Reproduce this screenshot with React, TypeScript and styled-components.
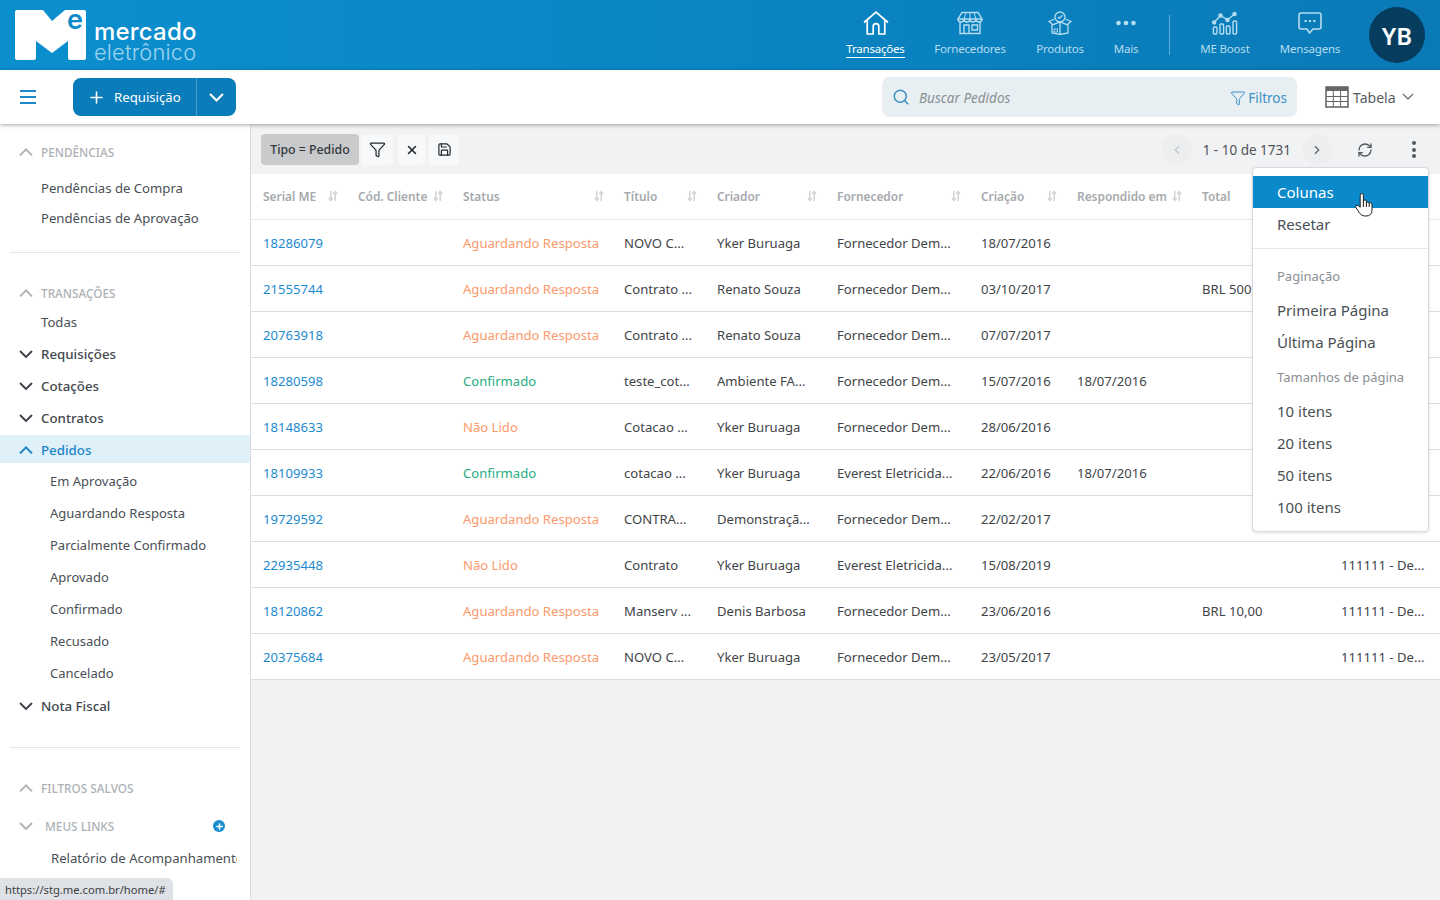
import React from 'react';
import styled, { createGlobalStyle } from 'styled-components';
import { ChevronLeft, ChevronRight, Filter, Plus, RefreshCw, Save, Search, X } from 'lucide-react';

const GlobalStyle = createGlobalStyle`
  html, body { margin: 0; padding: 0; height: 100%; overflow: hidden; }
  body { font-family: "Noto Sans", "Open Sans", sans-serif; color: #3a3f45; background: #fff; }
  * { box-sizing: border-box; }
`;

const Page = styled.div`
  position: relative;
  width: 1440px;
  height: 900px;
  display: flex;
  flex-direction: column;
  overflow: hidden;
`;

const Header = styled.header`
  height: 70px;
  flex: none;
  display: flex;
  align-items: center;
  padding: 0 15px;
  background: linear-gradient(90deg, #0b8fcf 0%, #0a7ab7 100%);
`;

const Logo = styled.div`
  display: flex;
  align-items: flex-end;
  gap: 8px;
  height: 50px;
`;

const LogoMark = styled.div`
  position: relative;
  width: 71px;
  height: 50px;
`;

const LogoE = styled.span`
  position: absolute;
  top: -7px;
  right: 3px;
  font: 600 27px "Inter", sans-serif;
  color: #0b8bca;
`;

const LogoWords = styled.div`
  display: flex;
  flex-direction: column;
  font-family: "Inter", sans-serif;
  line-height: 20px;
  height: 38px;
`;

const LogoTop = styled.span`
  font-size: 24px;
  font-weight: 500;
  color: #fff;
  letter-spacing: 0.2px;
`;

const LogoBottom = styled.span`
  font-size: 21.8px;
  font-weight: 300;
  color: #9fd3ec;
  letter-spacing: 0.2px;
`;

const TopNav = styled.nav`
  margin-left: auto;
  display: flex;
  align-items: center;
  height: 70px;
`;

const NavItem = styled.a<{ $active?: boolean; $w: number }>`
  width: ${(p) => p.$w}px;
  display: flex;
  flex-direction: column;
  align-items: center;
  padding-top: 9px;
  height: 70px;
  color: ${(p) => (p.$active ? '#fff' : '#b5dcef')};
  font-size: 11.5px;
  letter-spacing: -0.2px;
  white-space: nowrap;
`;

const NavIcon = styled.div`
  height: 28px;
  margin-bottom: 4px;
  display: flex;
  align-items: center;
  justify-content: center;
`;

const NavLabel = styled.span<{ $active?: boolean }>`
  line-height: 16px;
  padding-bottom: 0;
  border-bottom: 1px solid ${(p) => (p.$active ? '#fff' : 'transparent')};
`;

const NavDivider = styled.div`
  width: 1px;
  height: 40px;
  margin: 0 14px 0 17px;
  background: #62add3;
`;

const Avatar = styled.div`
  width: 56px;
  height: 56px;
  margin-left: 15px;
  border-radius: 50%;
  background: #063d5e;
  color: #fff;
  font-size: 24px;
  font-weight: 600;
  display: flex;
  align-items: center;
  justify-content: center;
`;

const Toolbar = styled.div`
  position: relative;
  z-index: 2;
  height: 54px;
  flex: none;
  display: flex;
  align-items: center;
  padding: 0 16px 0 20px;
  background: #fff;
  box-shadow: 0 1px 4px rgba(0, 0, 0, 0.35);
`;

const Burger = styled.div`
  width: 16px;
  height: 14px;
  display: flex;
  flex-direction: column;
  justify-content: space-between;
  span { height: 2px; background: #1e88cc; }
`;

const ActionButton = styled.div`
  margin-left: 37px;
  width: 163px;
  height: 38px;
  display: flex;
  border-radius: 8px;
  background: #0a7cb9;
  color: #fff;
  font-size: 13.2px;
`;

const ActionMain = styled.div`
  width: 124px;
  display: flex;
  align-items: center;
  gap: 8px;
  padding-left: 14px;
  border-right: 1px solid #4a9ecb;
`;

const ActionCaret = styled.div`
  flex: 1;
  display: flex;
  align-items: center;
  justify-content: center;
`;

const SearchBox = styled.div`
  margin-left: auto;
  width: 415px;
  height: 40px;
  display: flex;
  align-items: center;
  padding: 0 10px;
  border-radius: 8px;
  background: #e8eff3;
  color: #3c8fc4;
  font-size: 13.5px;
`;

const SearchText = styled.span`
  flex: 1;
  margin-left: 9px;
  padding-top: 1px;
  color: #8a8f94;
  font-style: italic;
  font-size: 13.5px;
`;

const FilterLink = styled.span`
  display: flex;
  align-items: center;
  gap: 2px;
  padding-top: 1px;
`;

const ViewSwitch = styled.div`
  width: 99px;
  margin-left: 28px;
  display: flex;
  align-items: center;
  gap: 4px;
  color: #555b60;
  font-size: 14px;
`;

const ViewCaret = styled.span`
  margin-left: 2px;
  display: flex;
`;

const Body = styled.div`
  flex: 1;
  display: flex;
  min-height: 0;
`;

const Sidebar = styled.aside`
  width: 251px;
  flex: none;
  padding-top: 12px;
  background: #fff;
  border-right: 1px solid #d9dbde;
  overflow: hidden;
`;

const SectionHead = styled.div<{ $indent?: number; $mt?: number }>`
  height: 32px;
  margin-top: ${(p) => p.$mt ?? 0}px;
  display: flex;
  align-items: center;
  padding-left: 19px;
  gap: ${(p) => p.$indent ?? 8}px;
  color: #adb1b5;
  font-size: 11.8px;
  font-weight: 500;
  svg { color: #b0b3b7; flex: none; }
`;

const PlusDot = styled.span`
  margin-left: 87px;
  width: 12px;
  height: 12px;
  border-radius: 50%;
  background: #1b8dd0;
  display: flex;
  align-items: center;
  justify-content: center;
  svg { color: #fff; }
`;

const SideLink = styled.div<{ $h?: number; $left?: number; $mt?: number; $mb?: number; $size?: number }>`
  height: ${(p) => p.$h ?? 30}px;
  margin: ${(p) => p.$mt ?? 0}px 13px ${(p) => p.$mb ?? 0}px 0;
  display: flex;
  align-items: center;
  padding-left: ${(p) => p.$left ?? 41}px;
  color: #4a4f55;
  font-size: ${(p) => p.$size ?? 13.15}px;
  white-space: nowrap;
  overflow: hidden;
`;

const SideGroup = styled.div<{ $active?: boolean; $mt?: number }>`
  height: ${(p) => (p.$active ? 28 : 32)}px;
  margin: ${(p) => (p.$active ? '1px 0 2px' : `${p.$mt ?? 0}px 0 0`)};
  padding: ${(p) => (p.$active ? '2px 0 0 19px' : '0 0 0 19px')};
  display: flex;
  align-items: center;
  gap: 8px;
  font-size: 13.3px;
  font-weight: 500;
  color: ${(p) => (p.$active ? '#1a86c8' : '#42474d')};
  background: ${(p) => (p.$active ? '#dff0f9' : 'transparent')};
  svg { flex: none; }
`;

const SideDivider = styled.hr<{ $mt: number; $mb: number }>`
  margin: ${(p) => p.$mt}px 10px ${(p) => p.$mb}px;
  border: 0;
  border-top: 1px solid #e4e5e7;
`;

const Main = styled.main`
  flex: 1;
  min-width: 0;
  background: #f1f2f4;
`;

const FilterBar = styled.div`
  height: 50px;
  display: flex;
  align-items: center;
  padding: 1px 24px 0 10px;
`;

const Chip = styled.div`
  width: 98px;
  height: 31px;
  display: flex;
  align-items: center;
  justify-content: center;
  border-radius: 4px;
  background: #c9cacb;
  color: #33383d;
  font-size: 12.3px;
  font-weight: 500;
  white-space: nowrap;
`;

const ChipButton = styled.div<{ $w: number; $ml: number }>`
  width: ${(p) => p.$w}px;
  height: 31px;
  margin-left: ${(p) => p.$ml}px;
  border-radius: 4px;
  background: #f7f8f9;
  color: #25292e;
  display: flex;
  align-items: center;
  justify-content: center;
`;

const Pager = styled.div`
  margin-left: auto;
  display: flex;
  align-items: center;
  color: #4f5357;
  font-size: 13.5px;
`;

const PageRound = styled.div<{ $off?: boolean }>`
  width: 30px;
  height: 30px;
  border-radius: 50%;
  background: #eceeef;
  color: ${(p) => (p.$off ? '#c3c6c9' : '#5c6064')};
  display: flex;
  align-items: center;
  justify-content: center;
`;

const PageText = styled.span`
  margin: 0 11px;
`;

const BarIcon = styled.div<{ $ml: number }>`
  margin-left: ${(p) => p.$ml}px;
  display: flex;
  color: #55595e;
`;

const Dots = styled.div`
  margin-left: 39px;
  display: flex;
  flex-direction: column;
  gap: 2.6px;
  span { width: 4px; height: 4px; border-radius: 50%; background: #55595e; }
`;

const columns = '95px 105px 161px 93px 120px 144px 96px 125px 139px 111px';

const TableHead = styled.div`
  height: 46px;
  display: grid;
  grid-template-columns: ${columns};
  background: #fff;
  border-bottom: 1px solid #e6e7ea;
`;

const HeadCell = styled.div`
  display: flex;
  align-items: center;
  justify-content: space-between;
  padding: 0 8px 1px 12px;
  color: #a6a9ad;
  font-size: 11.9px;
  font-weight: 600;
  white-space: nowrap;
  svg { flex: none; color: #d3d5d7; }
`;

const Row = styled.div`
  height: 46px;
  display: grid;
  grid-template-columns: ${columns};
  background: #fff;
  border-bottom: 1px solid #dcdee1;
`;

const Cell = styled.div<{ $tone?: 'link' | 'wait' | 'ok' }>`
  display: flex;
  align-items: center;
  padding-left: 12px;
  font-size: 13.1px;
  white-space: nowrap;
  overflow: hidden;
  color: ${(p) => (p.$tone === 'link' ? '#1d8ad0' : p.$tone === 'wait' ? '#fb9a6c' : p.$tone === 'ok' ? '#27ad83' : '#3f4449')};
`;

const Popup = styled.div`
  position: absolute;
  z-index: 5;
  left: 1252px;
  top: 167px;
  width: 177px;
  height: 365px;
  padding-top: 8px;
  background: #fff;
  border: 1px solid #d8dadd;
  border-radius: 4px;
  box-shadow: 0 1px 3px rgba(0, 0, 0, 0.12);
  color: #4a4f54;
  font-size: 15px;
`;

const PopupItem = styled.div<{ $active?: boolean; $mt?: number }>`
  height: 32px;
  margin-top: ${(p) => p.$mt ?? 0}px;
  display: flex;
  align-items: center;
  padding-left: 24px;
  background: ${(p) => (p.$active ? '#0b8acb' : 'transparent')};
  color: ${(p) => (p.$active ? '#fff' : 'inherit')};
`;

const PopupLabel = styled.div<{ $mt: number; $h: number }>`
  height: ${(p) => p.$h}px;
  margin-top: ${(p) => p.$mt}px;
  display: flex;
  align-items: center;
  padding-left: 24px;
  color: #8b8f94;
  font-size: 13px;
`;

const PopupDivider = styled.div`
  margin-top: 8px;
  border-top: 1px solid #e5e6e8;
`;

const Cursor = styled.div`
  position: absolute;
  z-index: 6;
  left: 1355px;
  top: 193px;
  display: flex;
`;

const StatusBar = styled.div`
  position: absolute;
  z-index: 6;
  left: 0;
  bottom: 0;
  height: 22px;
  width: 173px;
  padding-left: 5px;
  display: flex;
  align-items: center;
  background: #dee1e6;
  border-top-right-radius: 6px;
  color: #3c4043;
  font-size: 11.2px;
  white-space: nowrap;
`;

// chevrons in the reference are wider and flatter than the lucide ones
function Caret ({ up, width = 14, weight = 2 }: { up?: boolean; width?: number; weight?: number }) {
  return (
    <svg fill='none' height={width * 0.6} stroke='currentColor' strokeWidth={weight} viewBox='0 0 14 8.4' width={width}>
      <path d={up ? 'M1 7.4L7 1.4l6 6' : 'M1 1l6 6 6-6'} />
    </svg>
  );
}

function SortIcon () {
  return (
    <svg fill='none' height='12' stroke='currentColor' strokeWidth='1.6' viewBox='0 0 10 12' width='10'>
      <path d='M2.8 1v9.5M.8 8l2 2.5L4.8 8M7.2 11V1.5M5.2 4l2-2.5 2 2.5' />
    </svg>
  );
}

function HouseIcon () {
  return (
    <svg fill='none' height='24' stroke='currentColor' strokeWidth='1.7' viewBox='0 0 26 24' width='26'>
      <path d='M1 11.5L13 1.2l12 10.3' />
      <path d='M4.2 9v14h6V15.5q0-2.8 2.8-2.8t2.8 2.8V23h6V9' />
    </svg>
  );
}

function StoreIcon () {
  return (
    <svg fill='none' height='24' stroke='currentColor' strokeWidth='1.4' viewBox='0 0 26 24' width='26'>
      <path d='M5 1.5h16l4 6.5H1z' />
      <path d='M1 8q0 3 3 3t3-3q0 3 3 3t3-3q0 3 3 3t3-3q0 3 3 3t3-3' />
      <path d='M3 11v11.5h20V11' />
      <path d='M7 22.5V14h5v8.5M15 14h5.5v5H15z' />
      <path d='M9 1.5L7 8M17 1.5L19 8M13 1.5V8' strokeWidth='1' />
    </svg>
  );
}

function BoxIcon () {
  return (
    <svg fill='none' height='24' stroke='currentColor' strokeWidth='1.3' viewBox='0 0 24 24' width='24'>
      <circle cx='12' cy='6' r='5' />
      <path d='M9.8 6l1.6 1.4 3-3.2' />
      <path d='M6.5 8L1 10.5l4 3.2 7-2.7 7 2.7 4-3.2L17.5 8' />
      <path d='M4 13v9l8 1.5 8-1.5v-9M12 11v12.5' />
      <path d='M6 18h3.5v3H6z' strokeWidth='1' />
    </svg>
  );
}

function DotsIcon () {
  return (
    <svg fill='currentColor' height='6' viewBox='0 0 20 6' width='20'>
      <circle cx='2.5' cy='3' r='2.3' />
      <circle cx='10' cy='3' r='2.3' />
      <circle cx='17.5' cy='3' r='2.3' />
    </svg>
  );
}

function BoostIcon () {
  return (
    <svg fill='none' height='24' stroke='currentColor' strokeWidth='1.4' viewBox='0 0 26 24' width='26'>
      <path d='M2 11.5L8.5 4.5l7 4.5L22.5 3' />
      <circle cx='2.2' cy='11.5' fill='currentColor' r='1.5' />
      <circle cx='8.5' cy='4.5' fill='currentColor' r='1.5' />
      <circle cx='15.5' cy='9' fill='currentColor' r='1.5' />
      <circle cx='22.5' cy='3' fill='currentColor' r='1.5' />
      <rect height='7' rx='1' width='3.6' x='1.4' y='16' />
      <rect height='10' rx='1' width='3.6' x='8' y='13' />
      <rect height='8' rx='1' width='3.6' x='14.4' y='15' />
      <rect height='13' rx='1' width='3.6' x='21' y='10' />
    </svg>
  );
}

function ChatIcon () {
  return (
    <svg fill='none' height='22' stroke='currentColor' strokeWidth='1.6' viewBox='0 0 24 22' width='24'>
      <path d='M3 1h18q2 0 2 2v12q0 2-2 2h-6l-3.5 4L9 17H3q-2 0-2-2V3q0-2 2-2z' />
      <path d='M6.5 9h2.2M10.9 9h2.2M15.3 9h2.2' strokeWidth='2' />
    </svg>
  );
}

function TableIcon () {
  return (
    <svg fill='none' height='22' viewBox='0 0 24 22' width='24'>
      <rect fill='#fff' height='20' stroke='#555' strokeWidth='1.4' width='22' x='1' y='1' />
      <rect fill='#666' height='4' width='22' x='1' y='1' />
      <path d='M1 10.5h22M1 15.5h22M8.3 5v16M15.6 5v16' stroke='#666' strokeWidth='1' />
    </svg>
  );
}

function HandCursor () {
  return (
    <svg fill='#fff' height='24' stroke='#222' strokeLinejoin='round' strokeWidth='1' viewBox='0 0 18 24' width='18'>
      <path d='M5.2 13V2.1a1.6 1.6 0 0 1 3.2 0V10V8.4a1.5 1.5 0 0 1 3 0V10.4a1.4 1.4 0 0 1 2.8 0v.8a1.4 1.4 0 0 1 2.8 0V17q0 6-6 6H9.5q-3 0-5-3L1 14.8q-1-2 1-2.5 1.5-.2 3.2 2z' />
      <path d='M8.4 10v4M11.4 10v4M14.2 11v3' />
    </svg>
  );
}

const headers = ['Serial ME', 'Cód. Cliente', 'Status', 'Título', 'Criador', 'Fornecedor', 'Criação', 'Respondido em', 'Total', ''];

const rows = [
  ['18286079', 'Aguardando Resposta', 'NOVO C...', 'Yker Buruaga', 'Fornecedor Dem...', '18/07/2016', '', '', ''],
  ['21555744', 'Aguardando Resposta', 'Contrato ...', 'Renato Souza', 'Fornecedor Dem...', '03/10/2017', '', 'BRL 500,00', ''],
  ['20763918', 'Aguardando Resposta', 'Contrato ...', 'Renato Souza', 'Fornecedor Dem...', '07/07/2017', '', '', ''],
  ['18280598', 'Confirmado', 'teste_cot...', 'Ambiente FA...', 'Fornecedor Dem...', '15/07/2016', '18/07/2016', '', ''],
  ['18148633', 'Não Lido', 'Cotacao ...', 'Yker Buruaga', 'Fornecedor Dem...', '28/06/2016', '', '', ''],
  ['18109933', 'Confirmado', 'cotacao ...', 'Yker Buruaga', 'Everest Eletricida...', '22/06/2016', '18/07/2016', '', ''],
  ['19729592', 'Aguardando Resposta', 'CONTRA...', 'Demonstraçã...', 'Fornecedor Dem...', '22/02/2017', '', '', ''],
  ['22935448', 'Não Lido', 'Contrato', 'Yker Buruaga', 'Everest Eletricida...', '15/08/2019', '', '', '111111 - De...'],
  ['18120862', 'Aguardando Resposta', 'Manserv ...', 'Denis Barbosa', 'Fornecedor Dem...', '23/06/2016', '', 'BRL 10,00', '111111 - De...'],
  ['20375684', 'Aguardando Resposta', 'NOVO C...', 'Yker Buruaga', 'Fornecedor Dem...', '23/05/2017', '', '', '111111 - De...']
];

const pedidos = ['Em Aprovação', 'Aguardando Resposta', 'Parcialmente Confirmado', 'Aprovado', 'Confirmado', 'Recusado', 'Cancelado'];

function statusTone (status: string): 'ok' | 'wait' {
  return status === 'Confirmado' ? 'ok' : 'wait';
}

export default function App (): React.ReactElement {
  return (
    <Page>
      <GlobalStyle />
      <Header>
        <Logo>
          <LogoMark>
            <svg height='50' viewBox='0 0 71 50' width='71'>
              <path d='M2 0H28L37 11L50 0H69Q71 0 71 2V48Q71 50 69 50H55Q53 50 53 48V31L37 43L21 31V48Q21 50 19 50H2Q0 50 0 48V2Q0 0 2 0Z' fill='#fff' />
            </svg>
            <LogoE>e</LogoE>
          </LogoMark>
          <LogoWords>
            <LogoTop>mercado</LogoTop>
            <LogoBottom>eletrônico</LogoBottom>
          </LogoWords>
        </Logo>
        <TopNav>
          <NavItem $active $w={89}><NavIcon><HouseIcon /></NavIcon><NavLabel $active>Transações</NavLabel></NavItem>
          <NavItem $w={100}><NavIcon><StoreIcon /></NavIcon><NavLabel>Fornecedores</NavLabel></NavItem>
          <NavItem $w={80}><NavIcon><BoxIcon /></NavIcon><NavLabel>Produtos</NavLabel></NavItem>
          <NavItem $w={52}><NavIcon><DotsIcon /></NavIcon><NavLabel>Mais</NavLabel></NavItem>
          <NavDivider />
          <NavItem $w={82}><NavIcon><BoostIcon /></NavIcon><NavLabel>ME Boost</NavLabel></NavItem>
          <NavItem $w={88}><NavIcon><ChatIcon /></NavIcon><NavLabel>Mensagens</NavLabel></NavItem>
          <Avatar>YB</Avatar>
        </TopNav>
      </Header>
      <Toolbar>
        <Burger><span /><span /><span /></Burger>
        <ActionButton>
          <ActionMain><Plus size={19} strokeWidth={2} />Requisição</ActionMain>
          <ActionCaret><Caret width={15} /></ActionCaret>
        </ActionButton>
        <SearchBox>
          <Search size={18} />
          <SearchText>Buscar Pedidos</SearchText>
          <FilterLink><Filter size={16} strokeWidth={1.5} />Filtros</FilterLink>
        </SearchBox>
        <ViewSwitch>
          <TableIcon />Tabela<ViewCaret><Caret weight={1.3} width={12} /></ViewCaret>
        </ViewSwitch>
      </Toolbar>
      <Body>
        <Sidebar>
          <SectionHead><Caret up />PENDÊNCIAS</SectionHead>
          <SideLink $h={30} $mt={5}>Pendências de Compra</SideLink>
          <SideLink $h={30}>Pendências de Aprovação</SideLink>
          <SideDivider $mb={24} $mt={19} />
          <SectionHead><Caret up />TRANSAÇÕES</SectionHead>
          <SideLink $h={26} $mb={3}>Todas</SideLink>
          <SideGroup><Caret />Requisições</SideGroup>
          <SideGroup><Caret />Cotações</SideGroup>
          <SideGroup><Caret />Contratos</SideGroup>
          <SideGroup $active><Caret up />Pedidos</SideGroup>
          {pedidos.map((item) => <SideLink $h={32} $left={50} $size={13} key={item}>{item}</SideLink>)}
          <SideGroup $mt={1}><Caret />Nota Fiscal</SideGroup>
          <SideDivider $mb={24} $mt={25} />
          <SectionHead><Caret up />FILTROS SALVOS</SectionHead>
          <SectionHead $indent={12} $mt={6}>
            <Caret />MEUS LINKS
            <PlusDot><Plus size={9} strokeWidth={4} /></PlusDot>
          </SectionHead>
          <SideLink $h={32} $left={51}>Relatório de Acompanhamento de Pedidos</SideLink>
        </Sidebar>
        <Main>
          <FilterBar>
            <Chip>Tipo = Pedido</Chip>
            <ChipButton $ml={2} $w={32}><Filter size={17} strokeWidth={1.7} /></ChipButton>
            <ChipButton $ml={5} $w={27}><X size={14} strokeWidth={2.6} /></ChipButton>
            <ChipButton $ml={4} $w={30}><Save size={15} strokeWidth={1.9} /></ChipButton>
            <Pager>
              <PageRound $off><ChevronLeft size={14} /></PageRound>
              <PageText>1 - 10 de 1731</PageText>
              <PageRound><ChevronRight size={14} /></PageRound>
              <BarIcon $ml={25}><RefreshCw size={16} /></BarIcon>
              <Dots><span /><span /><span /></Dots>
            </Pager>
          </FilterBar>
          <TableHead>
            {headers.map((label, i) => (
              <HeadCell key={i}>{label}{label !== 'Total' && label !== '' && <SortIcon />}</HeadCell>
            ))}
          </TableHead>
          {rows.map((row) => (
            <Row key={row[0]}>
              <Cell $tone='link'>{row[0]}</Cell>
              <Cell />
              <Cell $tone={statusTone(row[1])}>{row[1]}</Cell>
              <Cell>{row[2]}</Cell>
              <Cell>{row[3]}</Cell>
              <Cell>{row[4]}</Cell>
              <Cell>{row[5]}</Cell>
              <Cell>{row[6]}</Cell>
              <Cell>{row[7]}</Cell>
              <Cell>{row[8]}</Cell>
            </Row>
          ))}
        </Main>
      </Body>
      <Popup>
        <PopupItem $active>Colunas</PopupItem>
        <PopupItem>Resetar</PopupItem>
        <PopupDivider />
        <PopupLabel $h={28} $mt={13}>Paginação</PopupLabel>
        <PopupItem $mt={4}>Primeira Página</PopupItem>
        <PopupItem>Última Página</PopupItem>
        <PopupLabel $h={36} $mt={1}>Tamanhos de página</PopupLabel>
        <PopupItem>10 itens</PopupItem>
        <PopupItem>20 itens</PopupItem>
        <PopupItem>50 itens</PopupItem>
        <PopupItem>100 itens</PopupItem>
      </Popup>
      <Cursor><HandCursor /></Cursor>
      <StatusBar>https://stg.me.com.br/home/#</StatusBar>
    </Page>
  );
}
